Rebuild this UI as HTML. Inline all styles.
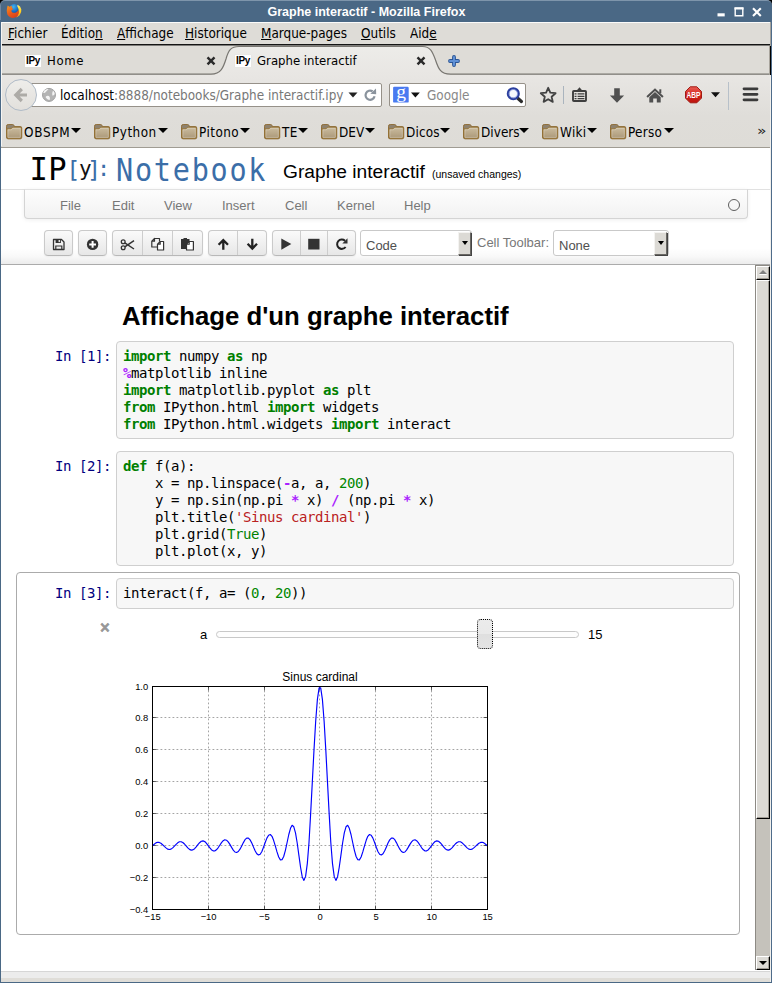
<!DOCTYPE html>
<html lang="fr">
<head>
<meta charset="utf-8">
<title>Graphe interactif - Mozilla Firefox</title>
<style>
html,body{margin:0;padding:0;}
body{width:772px;height:983px;overflow:hidden;background:#dcdad5;position:relative;
  font-family:"Liberation Sans","DejaVu Sans",sans-serif;}
.abs{position:absolute;}
.ui{font-family:"DejaVu Sans","Liberation Sans",sans-serif;font-size:13px;color:#000;white-space:nowrap;transform:scaleX(0.9);transform-origin:0 0;}
.mono{font-family:"DejaVu Sans Mono","Liberation Mono",monospace;}
u{text-decoration:underline;}
/* window frame */
#corners{left:0;top:0;width:772px;height:6px;background:#000;}
#titlebar{left:0;top:0;width:772px;height:22px;box-sizing:border-box;background:#4a6885;border-radius:5px 5px 0 0;border-top:1px solid #7e95ab;border-left:1px solid #6f87a0;}
#frameL{left:0;top:20px;width:1px;height:963px;background:#4a6885;}
#frameL2{left:1px;top:22px;width:1px;height:124px;background:#f6f5f3;}
#frameR{left:771px;top:20px;width:1px;height:963px;background:#4f6c8a;}
#frameR4{left:770px;top:22px;width:1px;height:24px;background:#a5a39e;}
#frameR2{left:769px;top:46px;width:2px;height:29px;background:linear-gradient(90deg,#a8a49c 0,#a8a49c 1px,#000 1px);}
#frameR3{left:770px;top:75px;width:1px;height:907px;background:#f1f0ed;}
#frameB{left:0;top:982px;width:772px;height:1px;background:#4a6885;}
#wtitle{left:267.5px;top:5.3px;color:#fff;font:bold 12.5px "Liberation Sans",sans-serif;line-height:15px;}
#menubar{left:2px;top:22px;width:768px;height:22px;background:#dedcd7;border-top:1px solid #fbfbfa;box-sizing:border-box;}
#menusep{left:1px;top:44px;width:770px;height:3px;background:linear-gradient(#141414 0,#141414 1px,#7d7c79 1px,#7d7c79 2px,#f0efec 2px);}
.menu{top:26px;font-size:13.4px;}

/* tabs */
#tabbar{left:2px;top:46px;width:768px;height:29px;background:#dedcd7;}
#navbg{left:1px;top:75px;width:770px;height:72px;background:#dedcd7;}
.fav{background:#fff;color:#000;font:bold 10px "Liberation Sans",sans-serif;letter-spacing:-0.3px;width:16px;height:11.5px;line-height:11px;text-align:center;box-shadow:0 0 1px #ddd;}
.tabtxt{top:53.3px;font-size:13px;}
/* nav */
#urlbar{left:28px;top:83px;width:354px;height:24px;background:#fff;border:1px solid #969189;border-radius:2px;box-sizing:border-box;}
#searchbar{left:389px;top:83px;width:137px;height:24px;background:#fff;border:1px solid #969189;border-radius:2px;box-sizing:border-box;}
#backbtn{left:5px;top:79px;width:32px;height:32px;border-radius:50%;background:linear-gradient(#eeedea,#e2e0dc);border:1px solid #b0bbc7;box-sizing:border-box;}
.bm{top:125px;font-size:13.4px;letter-spacing:0.05px;}
.bmf{top:123.8px;}
.bma{top:128.2px;margin-left:-0.4px;width:0;height:0;border-left:5px solid transparent;border-right:5px solid transparent;border-top:5.9px solid #000;}

/* ipython page */
.lg{white-space:nowrap;line-height:36px;height:36px;}
#nbname{left:283px;top:160.6px;font:19.2px "Liberation Sans",sans-serif;color:#000;white-space:nowrap;}
#unsaved{left:432px;top:168px;font:10.5px "Liberation Sans",sans-serif;color:#000;white-space:nowrap;}
#headershadow{left:1px;top:248px;width:770px;height:16px;background:linear-gradient(rgba(0,0,0,0),rgba(0,0,0,0.025) 50%,rgba(0,0,0,0.075));}
#menubarnb{left:24px;top:189px;width:724px;height:30px;box-sizing:border-box;background:linear-gradient(#fdfdfd,#f2f2f2);border:1px solid #d4d4d4;border-top-color:#e2e2e2;border-radius:0 0 4px 4px;box-shadow:0 1px 4px rgba(0,0,0,0.065);}
.nbm{top:198px;font:13px "Liberation Sans",sans-serif;color:#777;white-space:nowrap;}
.tbtn{top:230px;height:26px;box-sizing:border-box;border:1px solid #cacaca;border-bottom-color:#b8b8b8;border-radius:4px;background:linear-gradient(#fafafa,#e7e7e7);box-shadow:0 1px 2px rgba(0,0,0,0.05);}
.tdiv{top:231px;width:1px;height:24px;background:#cdcdcd;}
.sel{top:230px;height:26px;box-sizing:border-box;background:#fff;border:1px solid #c9c9c9;border-radius:3px;}
.selbtn{top:231.5px;width:13px;height:23px;box-sizing:border-box;background:#dcdad5;border:1px solid;border-color:#f4f3f1 #6a6864 #6a6864 #f4f3f1;box-shadow:1px 1px 0 #444;}
.selbtn:after{content:"";position:absolute;left:2.5px;top:8.5px;border-left:3px solid transparent;border-right:3px solid transparent;border-top:4px solid #000;}
.seltxt{font:13px "Liberation Sans",sans-serif;color:#505050;white-space:nowrap;}
#nbtop{left:1px;top:264px;width:770px;height:1px;background:#ababab;}
/* scrollbar */
#sbtrack{left:755px;top:265px;width:15px;height:705px;background:#c5c2bb;border-left:1px solid #8d8a84;border-top:1px solid #8d8a84;box-sizing:border-box;}
.sbbtn{left:756px;width:14px;height:14px;box-sizing:border-box;background:#dcdad5;border:1px solid;border-color:#fff #000 #000 #fff;box-shadow:inset -1px -1px 0 #a09c94;}
/* cells */
.prompt{font-size:14px;letter-spacing:-0.4287px;line-height:17px;color:#000080;white-space:pre;}
.inbox{left:116px;width:618px;box-sizing:border-box;background:#f7f7f7;border:1px solid #cfcfcf;border-radius:4px;}
.code{left:123px;font-size:14px;letter-spacing:-0.4287px;line-height:17px;color:#000;white-space:pre;margin:0;}
.k{color:#008000;font-weight:bold;}
.n{color:#008800;}
.o{color:#aa22ff;font-weight:bold;}
.s{color:#ba2121;}
.b{color:#008000;}
#selcell{left:16px;top:572px;width:724px;height:363px;box-sizing:border-box;border:1px solid #ababab;border-radius:4px;}
h1{margin:0;font:bold 25.75px "Liberation Sans",sans-serif;color:#000;white-space:nowrap;}
/* content */
#content{left:1px;top:148px;width:770px;height:823px;background:#fff;}
#contentTop{left:1px;top:147px;width:770px;height:1px;background:#a09c93;}
#statusband{left:1px;top:971px;width:770px;height:11px;background:linear-gradient(#d6d6d6 0,#d6d6d6 1px,#ececec 1px,#ececec 7px,#dfddd8 7px);}
</style>
</head>
<body>
<!-- ===== window frame ===== -->
<div id="corners" class="abs"></div>
<div id="titlebar" class="abs"></div>
<svg class="abs" style="left:6px;top:3px" width="17" height="17" viewBox="0 0 17 17">
  <defs>
    <radialGradient id="ffg" cx="0.42" cy="0.25" r="0.8"><stop offset="0" stop-color="#45b4ee"/><stop offset="0.5" stop-color="#1a6fc4"/><stop offset="1" stop-color="#0a2a78"/></radialGradient>
    <linearGradient id="ffo" x1="0.1" y1="0" x2="0.7" y2="1"><stop offset="0" stop-color="#f7921e"/><stop offset="0.55" stop-color="#ea5a1a"/><stop offset="1" stop-color="#d9401a"/></linearGradient>
    <linearGradient id="ffy" x1="0" y1="0" x2="0" y2="1"><stop offset="0" stop-color="#fff27a"/><stop offset="0.5" stop-color="#ffd21f"/><stop offset="1" stop-color="#f79a1c"/></linearGradient>
  </defs>
  <circle cx="8.3" cy="6.7" r="5.6" fill="url(#ffg)"/>
  <path d="M11.6 1.7 Q14.6 3 15.3 6.2 Q15.8 9.6 13.6 12.3 Q12 13.9 10 14.4 Q12.6 12 12.6 8.6 Q12.8 5.4 11.2 3 Z" fill="url(#ffy)"/>
  <path d="M1.8 2.6 Q2.8 3.6 3.7 3.7 Q4.8 2.9 6 3.1 Q5.5 4.1 5.9 4.9 Q7 5.2 7.3 5.9 Q6.4 6.8 5.5 6.9 Q5.1 8.4 6.4 9.4 Q8 10.2 10 9.4 Q11.8 8.6 12.5 6.8 Q13.3 9.6 12 12.2 Q10.4 15 7.2 15 Q3.4 14.7 1.4 11.4 Q0.2 8.6 1 5.6 Q1.2 3.8 1.8 2.600Z" fill="url(#ffo)"/>
</svg>
<svg class="abs" style="left:712px;top:2px" width="56" height="18" viewBox="712 2 56 18">
  <rect x="717.5" y="13.3" width="7.2" height="3.1" fill="#fff"/>
  <path d="M735.2 8.3 H742.8 V15.7 H735.2 Z" fill="none" stroke="#fff" stroke-width="1.4"/><rect x="734.5" y="7.3" width="9" height="2.2" fill="#fff"/>
  <path d="M753 8.2 L760.8 16 M760.8 8.2 L753 16" stroke="#fff" stroke-width="2.1" fill="none"/>
</svg>
<div id="wtitle" class="abs">Graphe interactif - Mozilla Firefox</div>
<div id="menubar" class="abs"></div>
<div id="menusep" class="abs"></div>
<div class="abs ui menu" style="left:8px"><u>F</u>ichier</div>
<div class="abs ui menu" style="left:61px">Éditio<u>n</u></div>
<div class="abs ui menu" style="left:117px"><u>A</u>ffichage</div>
<div class="abs ui menu" style="left:185px"><u>H</u>istorique</div>
<div class="abs ui menu" style="left:261px"><u>M</u>arque-pages</div>
<div class="abs ui menu" style="left:361px"><u>O</u>utils</div>
<div class="abs ui menu" style="left:410px">Aid<u>e</u></div>
<svg width="0" height="0" style="position:absolute"><defs><linearGradient id="fold" x1="0" y1="0" x2="0" y2="1"><stop offset="0" stop-color="#cbbc9f"/><stop offset="1" stop-color="#ab9878"/></linearGradient></defs></svg>
<div id="tabbar" class="abs"></div>
<div id="navbg" class="abs"></div>
<svg class="abs" style="left:0;top:44px" width="772" height="103" viewBox="0 44 772 103">
  <defs><linearGradient id="navg" gradientUnits="userSpaceOnUse" x1="0" y1="46" x2="0" y2="146"><stop offset="0" stop-color="#edece9"/><stop offset="0.3" stop-color="#e8e6e3"/><stop offset="0.7" stop-color="#dfddd9"/><stop offset="1" stop-color="#dedcd7"/></linearGradient></defs>
  <!-- active tab -->
  <path d="M2 75 H211 C221 75 223.5 67 226 59 C228.5 50 231 46.5 239 46.5 H422.5 C430.5 46.5 432.5 52 435.5 60 C438.5 69 440.5 75 450.5 75 H771 V147 H1 V75 Z" fill="url(#navg)"/>
  <path d="M2 74.2 H211 C221 74.2 223.5 67 226 59 C228.5 50 231 46.5 239 46.5 H422.5 C430.5 46.5 432.5 52 435.5 60 C438.5 69 440.5 74.2 450.5 74.2 H770" fill="none" stroke="#787671" stroke-width="1.2"/>
  <!-- close buttons -->
  <path d="M207.5 57.4 L214.5 64.4 M214.5 57.4 L207.5 64.4" stroke="#2a2a2a" stroke-width="2.4" fill="none"/>
  <path d="M417.5 57.4 L424.5 64.4 M424.5 57.4 L417.5 64.4" stroke="#2a2a2a" stroke-width="2.4" fill="none"/>
  <!-- new tab plus -->
  <path d="M454 57 V65 M450 61 H458" stroke="#2a5596" stroke-width="3.8" stroke-linecap="round" fill="none"/>
  <path d="M454 57 V65 M450 61 H458" stroke="#5f90d6" stroke-width="2" stroke-linecap="round" fill="none"/>
</svg>
<div class="abs fav" style="left:25px;top:55px">IPy</div>
<div class="abs ui tabtxt" style="left:46.8px;letter-spacing:0.7px">Home</div>
<div class="abs fav" style="left:235px;top:55px">IPy</div>
<div class="abs ui tabtxt" style="left:257px">Graphe interactif</div>

<div id="urlbar" class="abs"></div>
<div id="searchbar" class="abs"></div>
<div id="backbtn" class="abs"></div>
<svg class="abs" style="left:0;top:78px" width="772" height="36" viewBox="0 78 772 36">
  <defs><linearGradient id="abpg" x1="0" y1="0" x2="0" y2="1"><stop offset="0" stop-color="#ea5d55"/><stop offset="0.5" stop-color="#d3261d"/><stop offset="1" stop-color="#bd130d"/></linearGradient></defs>
  <!-- back arrow -->
  <path d="M27 95 H16.5 M21.8 89 L15.8 95 L21.8 101" fill="none" stroke="#adaba7" stroke-width="3.2" stroke-linejoin="miter"/>
  <!-- globe -->
  <circle cx="49" cy="94.9" r="6.5" fill="#b4b4b4" stroke="#a2a2a2" stroke-width="1"/>
  <path d="M44.3 90.5 q2 -2 4.2 -1.5 q-1.5 1.8 -3.2 3.5 q-1.2 0.8 -2 0.5 q0 -1.3 1 -2.500z M45.5 97 q1.5 -1.8 3.5 -1 q1.5 1.5 0.8 3.8 q-2.5 0.6 -4.3 -2.800z M53 90.5 q1.5 1.2 1.8 3.5 q-1.2 1.8 -2.5 1.5 q-0.5 -2.5 0.7 -5z" fill="#f4f4f4"/>
  <!-- url dropdown -->
  <path d="M348.5 92.5 h9 l-4.5 5z" fill="#222"/>
  <!-- reload -->
  <path d="M374.6 96.3 A4.6 4.6 0 1 1 372.6 91.3" fill="none" stroke="#8a939d" stroke-width="2.2"/>
  <path d="M370.3 93.8 L376.2 94.3 L376 88.6 Z" fill="#8a939d"/>
  <!-- google icon -->
  <rect x="393.1" y="86.8" width="15.6" height="15.8" rx="1.2" fill="#4a7af0"/>
  <path d="M411 92.5 h8.8 l-4.4 5z" fill="#111"/>
  <!-- magnifier -->
  <path d="M517.5 98 L521.4 101.4" stroke="#2a2a2a" stroke-width="3.3" stroke-linecap="round"/>
  <circle cx="513.3" cy="93.7" r="5.3" fill="#f6f8fd" stroke="#2b3f9e" stroke-width="2.5"/>
  <circle cx="513.3" cy="93.7" r="4.2" fill="none" stroke="#93a3e2" stroke-width="0.9"/>
  <!-- star -->
  <path d="M548.2 87.8 L550.3 92.7 L555.6 93.2 L551.6 96.7 L552.8 101.9 L548.2 99.2 L543.6 101.9 L544.8 96.7 L540.8 93.2 L546.1 92.7 Z" fill="none" stroke="#424242" stroke-width="1.8" stroke-linejoin="round"/>
  <path d="M563.5 86 V104" stroke="#aab4be" stroke-width="1"/>
  <!-- bookmarks list -->
  <rect x="573" y="91" width="13" height="10" rx="0.8" fill="none" stroke="#3e3e3e" stroke-width="1.9"/>
  <path d="M576.3 91 L579.5 87.3 L582.7 91 Z" fill="#3e3e3e"/>
  <path d="M574.6 93.9 h1.9 M577.6 93.9 h6.8 M574.6 96.3 h1.9 M577.6 96.3 h6.8 M574.6 98.7 h1.9 M577.6 98.7 h6.8" stroke="#3e3e3e" stroke-width="1.2"/>
  <!-- download -->
  <path d="M614.2 88.3 h5.6 v7.2 h4.3 l-7.1 7.2 l-7.1 -7.2 h4.3 z" fill="#505050"/>
  <!-- home -->
  <path d="M646.4 96.3 L655 88.2 L663.6 96.3 L662.2 97.7 L655 91 L647.8 97.7 Z" fill="#505050"/>
  <path d="M649.3 97.3 L655 92 L660.7 97.3 V102.6 H656.8 V98.6 H653.2 V102.6 H649.3 Z" fill="#505050"/>
  <rect x="659.3" y="89.3" width="2" height="4" fill="#505050"/>
  <!-- ABP -->
  <path d="M690.2 86.8 L696.8 86.8 L701.5 91.5 L701.5 98.1 L696.8 102.8 L690.2 102.8 L685.5 98.1 L685.5 91.5 Z" fill="url(#abpg)" stroke="#a11a13" stroke-width="1"/>
  <text transform="translate(693.5 97.8) scale(0.8 1)" x="0" y="0" text-anchor="middle" font-family="Liberation Sans, sans-serif" font-weight="bold" font-size="8.2" fill="#fff">ABP</text>
  <path d="M711 92.3 h9 l-4.5 5z" fill="#111"/>
  <path d="M728.5 82 V110" stroke="#b7c0c9" stroke-width="1"/>
  <!-- hamburger -->
  <path d="M744 88.8 h13 M744 94.3 h13 M744 99.8 h13" stroke="#3a3a3a" stroke-width="2.8" stroke-linecap="round"/>
</svg>
<div class="abs" style="left:393px;top:79.500px;width:16px;text-align:center;color:#fff;font:19.5px 'Liberation Serif',serif;line-height:24px">g</div>
<div class="abs ui" style="left:60px;top:88px;font-size:13.4px;color:#777">
<span style="color:#000">localhost</span>:8888/notebooks/Graphe interactif.ipy</div>
<div class="abs ui" style="left:427px;top:88px;font-size:13.4px;color:#888">Google</div>

<svg class="abs bmf" style="left:5.5px" width="17.2" height="16.3" viewBox="0 0 18 17" preserveAspectRatio="none"><path d="M0.5 2.3 Q0.5 0.5 2.3 0.5 H6.8 Q8 0.5 8.4 1.5 L8.9 2.7 H15 Q16.5 2.7 16.5 4.2 V13.8 Q16.5 15.5 14.8 15.5 H2.2 Q0.5 15.5 0.5 13.8 Z" fill="#8f826e" stroke="#8a6428" stroke-width="0.9"/><path d="M1 5 H5.3 L6.9 3.4 H16 V13.8 Q16 15 14.8 15 H2.2 Q1 15 1 13.8 Z" fill="url(#fold)" stroke="#94702f" stroke-width="0.9"/><path d="M2 6 H5.7 L7.3 4.4 H15 V13.5 Q15 14 14.5 14 H2.5 Q2 14 2 13.5 Z" fill="none" stroke="#fff" stroke-opacity="0.28" stroke-width="1"/></svg>
<div class="abs ui bm" style="left:24px;letter-spacing:0.8px">OBSPM</div><div class="abs bma" style="left:71.3px"></div>
<svg class="abs bmf" style="left:93.5px" width="17.2" height="16.3" viewBox="0 0 18 17" preserveAspectRatio="none"><path d="M0.5 2.3 Q0.5 0.5 2.3 0.5 H6.8 Q8 0.5 8.4 1.5 L8.9 2.7 H15 Q16.5 2.7 16.5 4.2 V13.8 Q16.5 15.5 14.8 15.5 H2.2 Q0.5 15.5 0.5 13.8 Z" fill="#8f826e" stroke="#8a6428" stroke-width="0.9"/><path d="M1 5 H5.3 L6.9 3.4 H16 V13.8 Q16 15 14.8 15 H2.2 Q1 15 1 13.8 Z" fill="url(#fold)" stroke="#94702f" stroke-width="0.9"/><path d="M2 6 H5.7 L7.3 4.4 H15 V13.5 Q15 14 14.5 14 H2.5 Q2 14 2 13.5 Z" fill="none" stroke="#fff" stroke-opacity="0.28" stroke-width="1"/></svg>
<div class="abs ui bm" style="left:112px;letter-spacing:0.55px">Python</div><div class="abs bma" style="left:158.5px"></div>
<svg class="abs bmf" style="left:180.5px" width="17.2" height="16.3" viewBox="0 0 18 17" preserveAspectRatio="none"><path d="M0.5 2.3 Q0.5 0.5 2.3 0.5 H6.8 Q8 0.5 8.4 1.5 L8.9 2.7 H15 Q16.5 2.7 16.5 4.2 V13.8 Q16.5 15.5 14.8 15.5 H2.2 Q0.5 15.5 0.5 13.8 Z" fill="#8f826e" stroke="#8a6428" stroke-width="0.9"/><path d="M1 5 H5.3 L6.9 3.4 H16 V13.8 Q16 15 14.8 15 H2.2 Q1 15 1 13.8 Z" fill="url(#fold)" stroke="#94702f" stroke-width="0.9"/><path d="M2 6 H5.7 L7.3 4.4 H15 V13.5 Q15 14 14.5 14 H2.5 Q2 14 2 13.5 Z" fill="none" stroke="#fff" stroke-opacity="0.28" stroke-width="1"/></svg>
<div class="abs ui bm" style="left:199px;letter-spacing:0.5px">Pitono</div><div class="abs bma" style="left:240.7px"></div>
<svg class="abs bmf" style="left:263.5px" width="17.2" height="16.3" viewBox="0 0 18 17" preserveAspectRatio="none"><path d="M0.5 2.3 Q0.5 0.5 2.3 0.5 H6.8 Q8 0.5 8.4 1.5 L8.9 2.7 H15 Q16.5 2.7 16.5 4.2 V13.8 Q16.5 15.5 14.8 15.5 H2.2 Q0.5 15.5 0.5 13.8 Z" fill="#8f826e" stroke="#8a6428" stroke-width="0.9"/><path d="M1 5 H5.3 L6.9 3.4 H16 V13.8 Q16 15 14.8 15 H2.2 Q1 15 1 13.8 Z" fill="url(#fold)" stroke="#94702f" stroke-width="0.9"/><path d="M2 6 H5.7 L7.3 4.4 H15 V13.5 Q15 14 14.5 14 H2.5 Q2 14 2 13.5 Z" fill="none" stroke="#fff" stroke-opacity="0.28" stroke-width="1"/></svg>
<div class="abs ui bm" style="left:282px;letter-spacing:0.5px">TE</div><div class="abs bma" style="left:298.3px"></div>
<svg class="abs bmf" style="left:320.5px" width="17.2" height="16.3" viewBox="0 0 18 17" preserveAspectRatio="none"><path d="M0.5 2.3 Q0.5 0.5 2.3 0.5 H6.8 Q8 0.5 8.4 1.5 L8.9 2.7 H15 Q16.5 2.7 16.5 4.2 V13.8 Q16.5 15.5 14.8 15.5 H2.2 Q0.5 15.5 0.5 13.8 Z" fill="#8f826e" stroke="#8a6428" stroke-width="0.9"/><path d="M1 5 H5.3 L6.9 3.4 H16 V13.8 Q16 15 14.8 15 H2.2 Q1 15 1 13.8 Z" fill="url(#fold)" stroke="#94702f" stroke-width="0.9"/><path d="M2 6 H5.7 L7.3 4.4 H15 V13.5 Q15 14 14.5 14 H2.5 Q2 14 2 13.5 Z" fill="none" stroke="#fff" stroke-opacity="0.28" stroke-width="1"/></svg>
<div class="abs ui bm" style="left:339px;letter-spacing:0.05px">DEV</div><div class="abs bma" style="left:365.3px"></div>
<svg class="abs bmf" style="left:387.5px" width="17.2" height="16.3" viewBox="0 0 18 17" preserveAspectRatio="none"><path d="M0.5 2.3 Q0.5 0.5 2.3 0.5 H6.8 Q8 0.5 8.4 1.5 L8.9 2.7 H15 Q16.5 2.7 16.5 4.2 V13.8 Q16.5 15.5 14.8 15.5 H2.2 Q0.5 15.5 0.5 13.8 Z" fill="#8f826e" stroke="#8a6428" stroke-width="0.9"/><path d="M1 5 H5.3 L6.9 3.4 H16 V13.8 Q16 15 14.8 15 H2.2 Q1 15 1 13.8 Z" fill="url(#fold)" stroke="#94702f" stroke-width="0.9"/><path d="M2 6 H5.7 L7.3 4.4 H15 V13.5 Q15 14 14.5 14 H2.5 Q2 14 2 13.5 Z" fill="none" stroke="#fff" stroke-opacity="0.28" stroke-width="1"/></svg>
<div class="abs ui bm" style="left:406px;letter-spacing:0.2px">Dicos</div><div class="abs bma" style="left:440.3px"></div>
<svg class="abs bmf" style="left:462.5px" width="17.2" height="16.3" viewBox="0 0 18 17" preserveAspectRatio="none"><path d="M0.5 2.3 Q0.5 0.5 2.3 0.5 H6.8 Q8 0.5 8.4 1.5 L8.9 2.7 H15 Q16.5 2.7 16.5 4.2 V13.8 Q16.5 15.5 14.8 15.5 H2.2 Q0.5 15.5 0.5 13.8 Z" fill="#8f826e" stroke="#8a6428" stroke-width="0.9"/><path d="M1 5 H5.3 L6.9 3.4 H16 V13.8 Q16 15 14.8 15 H2.2 Q1 15 1 13.8 Z" fill="url(#fold)" stroke="#94702f" stroke-width="0.9"/><path d="M2 6 H5.7 L7.3 4.4 H15 V13.5 Q15 14 14.5 14 H2.5 Q2 14 2 13.5 Z" fill="none" stroke="#fff" stroke-opacity="0.28" stroke-width="1"/></svg>
<div class="abs ui bm" style="left:481px;letter-spacing:0.05px">Divers</div><div class="abs bma" style="left:519.6px"></div>
<svg class="abs bmf" style="left:541.5px" width="17.2" height="16.3" viewBox="0 0 18 17" preserveAspectRatio="none"><path d="M0.5 2.3 Q0.5 0.5 2.3 0.5 H6.8 Q8 0.5 8.4 1.5 L8.9 2.7 H15 Q16.5 2.7 16.5 4.2 V13.8 Q16.5 15.5 14.8 15.5 H2.2 Q0.5 15.5 0.5 13.8 Z" fill="#8f826e" stroke="#8a6428" stroke-width="0.9"/><path d="M1 5 H5.3 L6.9 3.4 H16 V13.8 Q16 15 14.8 15 H2.2 Q1 15 1 13.8 Z" fill="url(#fold)" stroke="#94702f" stroke-width="0.9"/><path d="M2 6 H5.7 L7.3 4.4 H15 V13.5 Q15 14 14.5 14 H2.5 Q2 14 2 13.5 Z" fill="none" stroke="#fff" stroke-opacity="0.28" stroke-width="1"/></svg>
<div class="abs ui bm" style="left:560px;letter-spacing:0.3px">Wiki</div><div class="abs bma" style="left:587.2px"></div>
<svg class="abs bmf" style="left:609.5px" width="17.2" height="16.3" viewBox="0 0 18 17" preserveAspectRatio="none"><path d="M0.5 2.3 Q0.5 0.5 2.3 0.5 H6.8 Q8 0.5 8.4 1.5 L8.9 2.7 H15 Q16.5 2.7 16.5 4.2 V13.8 Q16.5 15.5 14.8 15.5 H2.2 Q0.5 15.5 0.5 13.8 Z" fill="#8f826e" stroke="#8a6428" stroke-width="0.9"/><path d="M1 5 H5.3 L6.9 3.4 H16 V13.8 Q16 15 14.8 15 H2.2 Q1 15 1 13.8 Z" fill="url(#fold)" stroke="#94702f" stroke-width="0.9"/><path d="M2 6 H5.7 L7.3 4.4 H15 V13.5 Q15 14 14.5 14 H2.5 Q2 14 2 13.5 Z" fill="none" stroke="#fff" stroke-opacity="0.28" stroke-width="1"/></svg>
<div class="abs ui bm" style="left:628px;letter-spacing:0.3px">Perso</div><div class="abs bma" style="left:664.3px"></div>
<div class="abs" style="left:757px;top:122.3px;font:15.5px 'DejaVu Sans',sans-serif;line-height:19px;color:#222;transform:scaleY(0.78);transform-origin:0 10.5px">»</div>

<div id="contentTop" class="abs"></div>
<div id="content" class="abs"></div>
<div id="headershadow" class="abs"></div>
<div class="abs lg mono" style="left:29.5px;top:152.4px;font-size:30.5px;color:#000;letter-spacing:0.3px;transform:scaleY(1.07);transform-origin:0 28.2px">IP</div>
<div class="abs lg mono" style="left:66.3px;top:151.5px;font-size:23.5px;color:#3b6ea8">[</div>
<div class="abs lg mono" style="left:79px;top:151px;font-size:21px;color:#111">y</div>
<div class="abs lg mono" style="left:87px;top:151.5px;font-size:23.5px;color:#3b6ea8">]</div>
<div class="abs lg mono" style="left:97px;top:151px;font-size:22px;color:#3b6ea8">:</div>
<div class="abs lg mono" style="left:116px;top:153.5px;font-size:28.5px;color:#3b6ea8;letter-spacing:1.75px;transform:scaleY(1.09);transform-origin:0 26.6px">Notebook</div>
<div id="nbname" class="abs">Graphe interactif</div>
<div id="unsaved" class="abs">(unsaved changes)</div>
<div class="abs" style="left:1px;top:189px;width:770px;height:1px;background:#e1e1e1"></div>
<div id="menubarnb" class="abs"></div>
<div class="abs nbm" style="left:60px">File</div>
<div class="abs nbm" style="left:112px">Edit</div>
<div class="abs nbm" style="left:164px">View</div>
<div class="abs nbm" style="left:222px">Insert</div>
<div class="abs nbm" style="left:285px">Cell</div>
<div class="abs nbm" style="left:337px">Kernel</div>
<div class="abs nbm" style="left:404px">Help</div>
<div class="abs" style="left:728px;top:199px;width:12px;height:12px;box-sizing:border-box;border:1.8px solid #5e5e5e;border-radius:50%"></div>
<!-- toolbar -->
<div class="abs tbtn" style="left:44px;width:29px"></div>
<div class="abs tbtn" style="left:78px;width:29px"></div>
<div class="abs tbtn" style="left:112px;width:91px"></div>
<div class="abs tdiv" style="left:142px"></div><div class="abs tdiv" style="left:172px"></div>
<div class="abs tbtn" style="left:208px;width:59px"></div>
<div class="abs tdiv" style="left:237px"></div>
<div class="abs tbtn" style="left:272px;width:84px"></div>
<div class="abs tdiv" style="left:300px"></div><div class="abs tdiv" style="left:327px"></div>
<svg class="abs" style="left:40px;top:228px" width="320" height="30" viewBox="40 228 320 30" fill="#333" stroke="none">
  <!-- save (floppy outline) -->
  <path d="M53.5 239.5 H61.5 L64 242 V249.5 H53.5 Z" fill="none" stroke="#333" stroke-width="1.3" stroke-linejoin="round"/>
  <path d="M55.6 239.6 H60.9 V243 H55.6 Z" fill="#333"/><rect x="58.6" y="240" width="1.3" height="2.1" fill="#f5f5f5"/>
  <path d="M55.8 249.3 V246 H61.8 V249.3" fill="none" stroke="#333" stroke-width="1.2"/>
  <!-- plus circle -->
  <circle cx="92.6" cy="244.4" r="5.7"/>
  <path d="M92.6 241 V247.8 M89.2 244.4 H96" stroke="#fff" stroke-width="2"/>
  <!-- scissors -->
  <circle cx="123.2" cy="241.8" r="1.9" fill="none" stroke="#333" stroke-width="1.3"/>
  <circle cx="123.2" cy="247.8" r="1.9" fill="none" stroke="#333" stroke-width="1.3"/>
  <path d="M124.8 242.8 L134 249 M124.8 246.8 L134 240.6" fill="none" stroke="#333" stroke-width="1.5"/>
  <!-- copy -->
  <path d="M154.5 238.5 H159.5 V241.5 M157.5 247 H151.8 V241.2 L154.5 238.5 V241.2 H151.8" fill="none" stroke="#333" stroke-width="1.2" stroke-linejoin="round"/>
  <path d="M157.5 244.2 L160.2 241.5 H163.6 V250 H157.5 Z M160.2 241.5 V244.2 H157.5" fill="#fff" stroke="#333" stroke-width="1.2" stroke-linejoin="round"/>
  <!-- paste -->
  <path d="M181 239 H189.5 V249 H181 Z M183.5 238 H187 V239.5 H183.500Z" fill="#333"/>
  <path d="M186.5 244.2 L189.2 241.5 H193.4 V250 H186.5 Z" fill="#fff" stroke="#333" stroke-width="1.2" stroke-linejoin="round"/>
  <path d="M189.2 241.5 V244.2 H186.5" fill="none" stroke="#333" stroke-width="1.1"/>
  <!-- arrow up -->
  <path d="M223.3 249.8 V241 M218.6 244.8 L223.3 240.1 L228 244.8" fill="none" stroke="#222" stroke-width="2.3"/>
  <!-- arrow down -->
  <path d="M252.3 238.8 V247.6 M247.6 243.8 L252.3 248.5 L257 243.8" fill="none" stroke="#222" stroke-width="2.3"/>
  <!-- play -->
  <path d="M281.3 238.4 L291.3 244.1 L281.3 249.8 Z"/>
  <!-- stop -->
  <rect x="308.2" y="238.8" width="11.3" height="10.7"/>
  <!-- repeat -->
  <path d="M345.6 247 A4.7 4.7 0 1 1 345 240.7" fill="none" stroke="#222" stroke-width="2"/>
  <path d="M347.5 238.3 V243.5 H342.3 Z"/>
</svg>

<div class="abs sel" style="left:360px;width:112px"></div>
<div class="abs selbtn" style="left:458px"></div>
<div class="abs seltxt" style="left:366px;top:237.8px">Code</div>
<div class="abs" style="left:477px;top:235px;font:13px 'Liberation Sans',sans-serif;color:#777;white-space:nowrap">Cell Toolbar:</div>
<div class="abs sel" style="left:553px;width:116px"></div>
<div class="abs selbtn" style="left:654px"></div>
<div class="abs seltxt" style="left:559px;top:237.8px">None</div>
<div id="nbtop" class="abs"></div>
<!-- scrollbar -->
<div id="sbtrack" class="abs"></div>
<div class="abs sbbtn" style="top:266px"></div>
<div class="abs" style="left:758.5px;top:270.5px;border-left:4px solid transparent;border-right:4px solid transparent;border-bottom:4.5px solid #fff"></div><div class="abs" style="left:758.5px;top:269.5px;border-left:4px solid transparent;border-right:4px solid transparent;border-bottom:4.5px solid #808080"></div>
<div class="abs sbbtn" style="top:280px;height:539px"></div>
<div class="abs sbbtn" style="top:956px"></div>
<div class="abs" style="left:758.5px;top:961px;border-left:4px solid transparent;border-right:4px solid transparent;border-top:4.5px solid #000"></div>
<!-- cells -->
<h1 class="abs" style="left:122px;top:301.6px">Affichage d'un graphe interactif</h1>
<div class="abs mono prompt" style="left:55px;top:347.7px">In [1]:</div>
<div class="abs inbox" style="top:341px;height:98px"></div>
<pre class="abs mono code" style="top:347.7px"><span class="k">import</span> numpy <span class="k">as</span> np
<span class="o">%</span>matplotlib inline
<span class="k">import</span> matplotlib.pyplot <span class="k">as</span> plt
<span class="k">from</span> IPython.html <span class="k">import</span> widgets
<span class="k">from</span> IPython.html.widgets <span class="k">import</span> interact</pre>
<div class="abs mono prompt" style="left:55px;top:457.7px">In [2]:</div>
<div class="abs inbox" style="top:451px;height:115px"></div>
<pre class="abs mono code" style="top:457.7px"><span class="k">def</span> f(a):
    x = np.linspace(<span class="o">-</span>a, a, <span class="n">200</span>)
    y = np.sin(np.pi <span class="o">*</span> x) <span class="o">/</span> (np.pi <span class="o">*</span> x)
    plt.title(<span class="s">'Sinus cardinal'</span>)
    plt.grid(<span class="b">True</span>)
    plt.plot(x, y)</pre>
<div id="selcell" class="abs"></div>
<div class="abs mono prompt" style="left:55px;top:584.7px">In [3]:</div>
<div class="abs inbox" style="top:578px;height:31px"></div>
<pre class="abs mono code" style="top:584.7px">interact(f, a= (<span class="n">0</span>, <span class="n">20</span>))</pre>
<div class="abs" style="left:99.3px;top:617.3px;font:bold 13.5px 'DejaVu Sans',sans-serif;color:#979797;-webkit-text-stroke:0.7px #979797;line-height:20px">×</div>
<div class="abs" style="left:200px;top:627px;font:13px 'Liberation Sans',sans-serif;color:#000;line-height:15px">a</div>
<div class="abs" style="left:216px;top:631px;width:363px;height:7px;box-sizing:border-box;border:1px solid #c8c8c8;border-radius:4px;background:#fdfdfd"></div>
<div class="abs" style="left:477px;top:619px;width:16px;height:29.5px;box-sizing:border-box;border:1px dotted #000;border-radius:4px;background:linear-gradient(#ebebeb 0%,#e9e9e9 50%,#dfdfdf 51%,#e4e4e4 100%)"></div>
<div class="abs" style="left:588px;top:626.5px;font:13px 'Liberation Sans',sans-serif;color:#000;line-height:15px">15</div>

<svg class="abs" style="left:120px;top:664px" width="400" height="266" viewBox="120 664 400 266" font-family="Liberation Sans, sans-serif" fill="#000">
<rect x="152.5" y="686.5" width="335.0" height="223.0" fill="#fff" stroke="none"/>
<path d="M208.5 686.5 V909.5 M264.5 686.5 V909.5 M319.5 686.5 V909.5 M375.5 686.5 V909.5 M431.5 686.5 V909.5 M152.5 877.5 H487.5 M152.5 845.5 H487.5 M152.5 813.5 H487.5 M152.5 781.5 H487.5 M152.5 749.5 H487.5 M152.5 717.5 H487.5 " stroke="#000" stroke-opacity="0.6" stroke-width="0.6" stroke-dasharray="1.8 2.2" fill="none"/>
<path d="M152.5 909.5 v-4 M152.5 686.5 v4 M208.5 909.5 v-4 M208.5 686.5 v4 M264.5 909.5 v-4 M264.5 686.5 v4 M319.5 909.5 v-4 M319.5 686.5 v4 M375.5 909.5 v-4 M375.5 686.5 v4 M431.5 909.5 v-4 M431.5 686.5 v4 M487.5 909.5 v-4 M487.5 686.5 v4 M152.5 909.5 h4 M487.5 909.5 h-4 M152.5 877.5 h4 M487.5 877.5 h-4 M152.5 845.5 h4 M487.5 845.5 h-4 M152.5 813.5 h4 M487.5 813.5 h-4 M152.5 781.5 h4 M487.5 781.5 h-4 M152.5 749.5 h4 M487.5 749.5 h-4 M152.5 717.5 h4 M487.5 717.5 h-4 M152.5 686.5 h4 M487.5 686.5 h-4 " stroke="#000" stroke-width="0.6" fill="none"/>
<polyline points="152.5,845.7 154.2,844.2 155.9,842.9 157.5,842.3 159.2,842.4 160.9,843.2 162.6,844.7 164.3,846.4 166.0,847.9 167.6,849.1 169.3,849.5 171.0,849.1 172.7,847.9 174.4,846.2 176.1,844.4 177.7,842.8 179.4,841.8 181.1,841.7 182.8,842.5 184.5,844.0 186.1,845.9 187.8,847.9 189.5,849.4 191.2,850.1 192.9,849.9 194.6,848.7 196.2,846.9 197.9,844.7 199.6,842.7 201.3,841.3 203.0,840.9 204.7,841.5 206.3,843.1 208.0,845.3 209.7,847.7 211.4,849.7 213.1,850.9 214.7,851.0 216.4,849.8 218.1,847.8 219.8,845.2 221.5,842.6 223.2,840.7 224.8,839.8 226.5,840.2 228.2,841.9 229.9,844.4 231.6,847.4 233.3,850.1 234.9,852.0 236.6,852.5 238.3,851.5 240.0,849.2 241.7,846.0 243.4,842.6 245.0,839.7 246.7,838.1 248.4,838.1 250.1,839.9 251.8,843.0 253.4,846.9 255.1,850.8 256.8,853.7 258.5,855.0 260.2,854.2 261.9,851.5 263.5,847.3 265.2,842.5 266.9,838.1 268.6,835.2 270.3,834.5 272.0,836.3 273.6,840.3 275.3,845.9 277.0,851.9 278.7,857.0 280.4,859.9 282.0,859.8 283.7,856.5 285.4,850.3 287.1,842.5 288.8,834.5 290.5,828.3 292.1,825.3 293.8,826.8 295.5,832.9 297.2,843.0 298.9,855.3 300.6,867.5 302.2,876.7 303.9,880.4 305.6,876.4 307.3,863.6 309.0,842.5 310.6,814.4 312.3,782.4 314.0,749.9 315.7,721.0 317.4,699.4 319.1,687.8 320.7,687.8 322.4,699.4 324.1,721.0 325.8,749.9 327.5,782.4 329.2,814.4 330.8,842.5 332.5,863.6 334.2,876.4 335.9,880.4 337.6,876.7 339.2,867.5 340.9,855.3 342.6,843.0 344.3,832.9 346.0,826.8 347.7,825.3 349.3,828.3 351.0,834.5 352.7,842.5 354.4,850.3 356.1,856.5 357.8,859.8 359.4,859.9 361.1,857.0 362.8,851.9 364.5,845.9 366.2,840.3 367.8,836.3 369.5,834.5 371.2,835.2 372.9,838.1 374.6,842.5 376.3,847.3 377.9,851.5 379.6,854.2 381.3,855.0 383.0,853.7 384.7,850.8 386.4,846.9 388.0,843.0 389.7,839.9 391.4,838.1 393.1,838.1 394.8,839.7 396.4,842.6 398.1,846.0 399.8,849.2 401.5,851.5 403.2,852.5 404.9,852.0 406.5,850.1 408.2,847.4 409.9,844.4 411.6,841.9 413.3,840.2 415.0,839.8 416.6,840.7 418.3,842.6 420.0,845.2 421.7,847.8 423.4,849.8 425.1,851.0 426.7,850.9 428.4,849.7 430.1,847.7 431.8,845.3 433.5,843.1 435.1,841.5 436.8,840.9 438.5,841.3 440.2,842.7 441.9,844.7 443.6,846.9 445.2,848.7 446.9,849.9 448.6,850.1 450.3,849.4 452.0,847.9 453.7,845.9 455.3,844.0 457.0,842.5 458.7,841.7 460.4,841.8 462.1,842.8 463.7,844.4 465.4,846.2 467.1,847.9 468.8,849.1 470.5,849.5 472.2,849.1 473.8,847.9 475.5,846.4 477.2,844.7 478.9,843.2 480.6,842.4 482.3,842.3 483.9,842.9 485.6,844.2 487.3,845.7" fill="none" stroke="#0000ff" stroke-width="1.15" stroke-linejoin="round"/>
<rect x="152.5" y="686.5" width="335.0" height="223.0" fill="none" stroke="#000" stroke-width="1"/>
<g font-size="9.4" text-anchor="middle"><text x="152.8" y="919.9">−15</text><text x="208.6" y="919.9">−10</text><text x="264.4" y="919.9">−5</text><text x="320.2" y="919.9">0</text><text x="376.0" y="919.9">5</text><text x="431.8" y="919.9">10</text><text x="487.6" y="919.9">15</text></g>
<g font-size="9.4" text-anchor="end"><text x="148.2" y="912.8">−0.4</text><text x="148.2" y="880.8">−0.2</text><text x="148.2" y="848.8">0.0</text><text x="148.2" y="816.8">0.2</text><text x="148.2" y="784.8">0.4</text><text x="148.2" y="752.8">0.6</text><text x="148.2" y="720.8">0.8</text><text x="148.2" y="689.8">1.0</text></g>
<text x="320.0" y="681.4" font-size="12" text-anchor="middle">Sinus cardinal</text>
</svg>


<div id="statusband" class="abs"></div>
<div id="frameL" class="abs"></div>
<div id="frameL2" class="abs"></div>
<div id="frameR" class="abs"></div>
<div id="frameR2" class="abs"></div>
<div id="frameR4" class="abs"></div>
<div id="frameR3" class="abs"></div>
<div id="frameB" class="abs"></div>
</body>
</html>
